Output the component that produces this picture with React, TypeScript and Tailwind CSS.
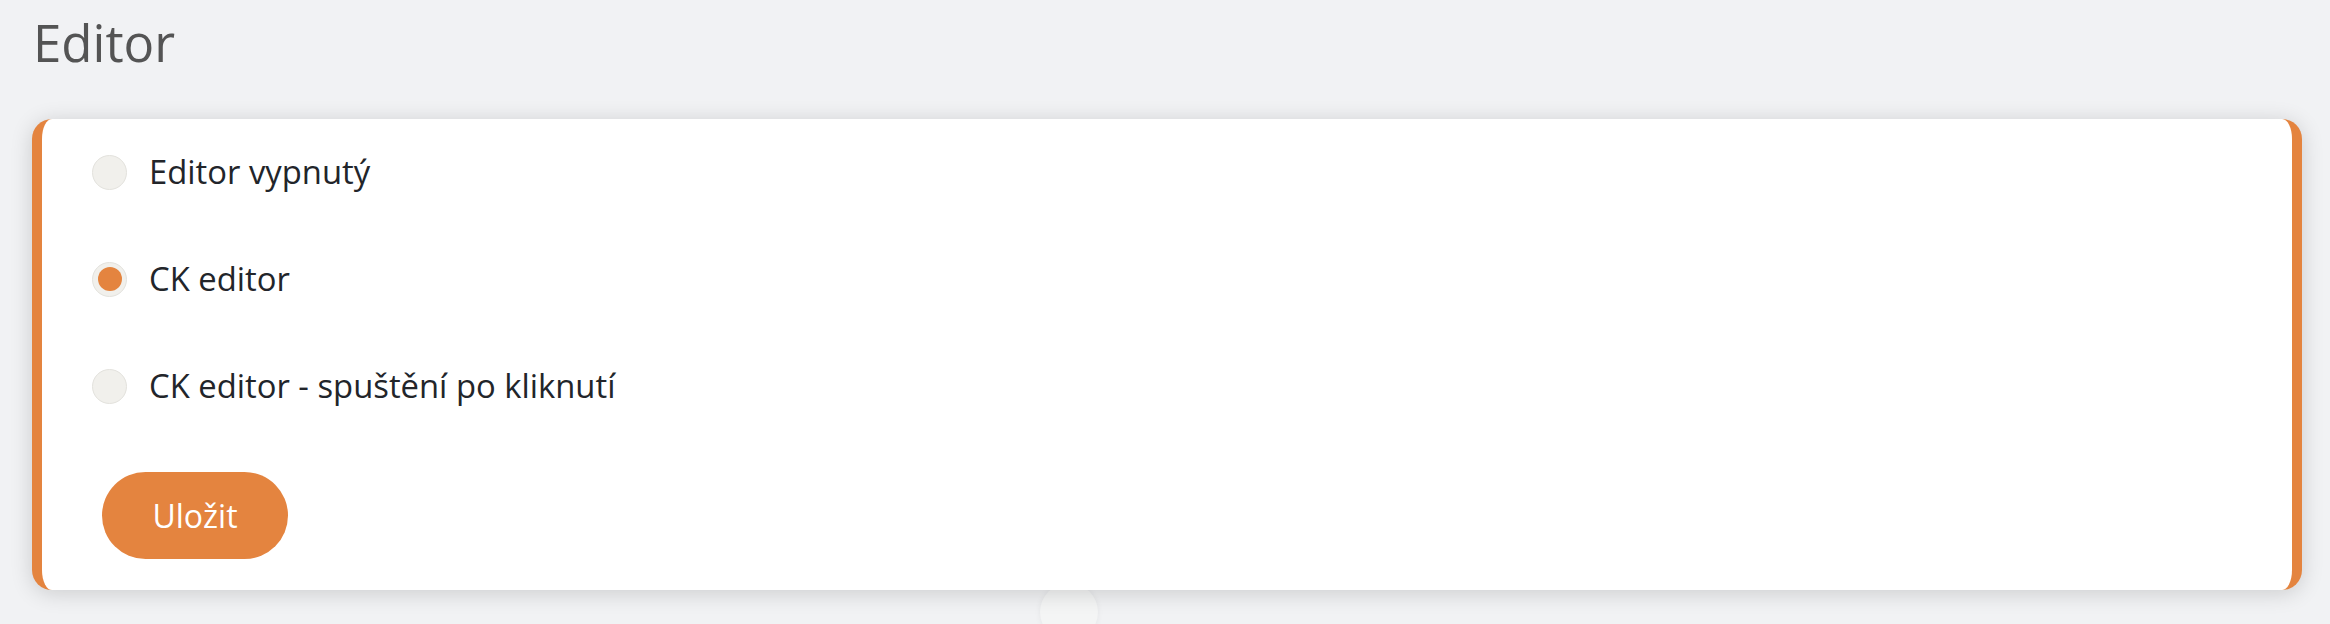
import React from "react";

const options = [
  { label: "Editor vypnutý", checked: false },
  { label: "CK editor", checked: true },
  { label: "CK editor - spuštění po kliknutí", checked: false },
];

export default function App() {
  return (
    <div
      className="relative min-h-[624px] w-full overflow-hidden bg-[#f1f2f4] pl-[32px] pr-[28px]"
      style={{ fontFamily: '"Open Sans", "Noto Sans", sans-serif' }}
    >
      <h1 className="pt-[7px] pl-[1px] text-[51px] leading-[71px] font-normal text-[#545454]">
        Editor
      </h1>
      <div className="absolute left-[1040px] top-[583px] h-[58px] w-[58px] rounded-full bg-[#f4f5f5] shadow-[0_0_6px_rgba(0,0,0,0.06)]" />
      <div className="relative mt-[41px] rounded-[20px] border-x-[10px] border-[#e4843f] bg-white pt-[35px] pb-[31px] pl-[50px] shadow-[0_3px_22px_rgba(0,0,0,0.16)]">
        <div className="flex flex-col gap-[71px]">
          {options.map((o) => (
            <label key={o.label} className="flex h-[36px] items-center">
              <span className="flex h-[35px] w-[35px] shrink-0 items-center justify-center rounded-full border-[1.5px] border-[#e3e2dd] bg-[#f1f0ec]">
                {o.checked && <span className="h-[24px] w-[24px] rounded-full bg-[#e4843f]" />}
              </span>
              <span className="ml-[22px] text-[32.8px] leading-[36px] text-[#22252a]">{o.label}</span>
            </label>
          ))}
        </div>
        <button className="mt-[68px] ml-[10px] flex h-[87px] w-[186px] items-center justify-center rounded-full bg-[#e4843f] text-[32px] text-white">
          Uložit
        </button>
      </div>
    </div>
  );
}
